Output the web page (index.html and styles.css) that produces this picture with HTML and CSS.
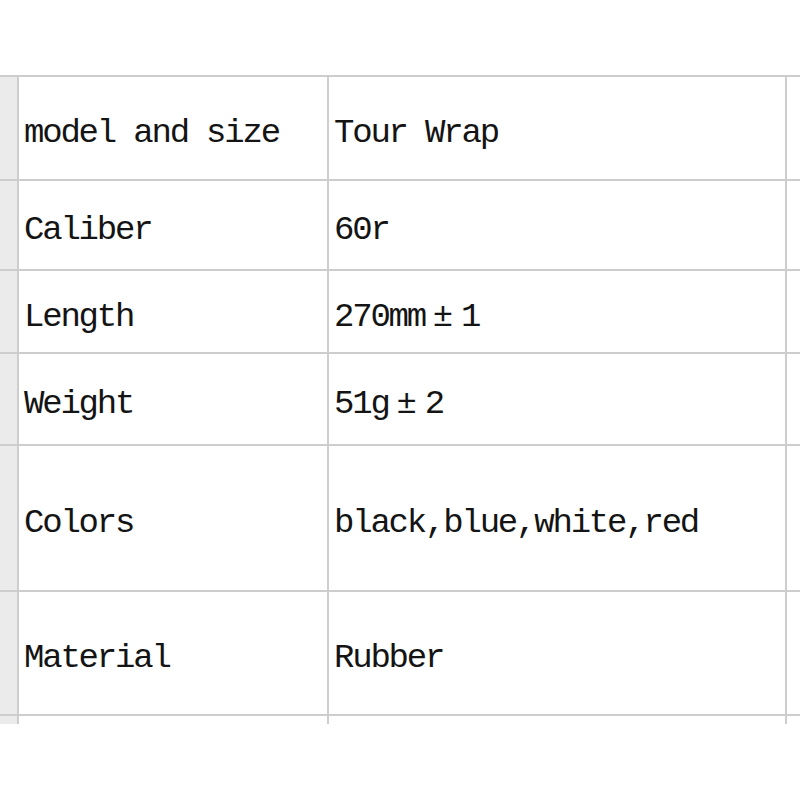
FILE: index.html
```html
<!DOCTYPE html>
<html>
<head>
<meta charset="utf-8">
<link rel="stylesheet" href="styles.css">
</head>
<body>
<div class="sheet">
<table class="grid">
  <colgroup>
    <col class="c-strip"><col class="c-key"><col class="c-val"><col class="c-extra">
  </colgroup>
  <tr class="r1"><td class="strip"></td><td>model and size</td><td>Tour Wrap</td><td class="extra"></td></tr>
  <tr class="r2"><td class="strip"></td><td>Caliber</td><td>60r</td><td class="extra"></td></tr>
  <tr class="r3"><td class="strip"></td><td>Length</td><td>270mm<span class="fw">±</span>1</td><td class="extra"></td></tr>
  <tr class="r4"><td class="strip"></td><td>Weight</td><td>51g<span class="fw">±</span>2</td><td class="extra"></td></tr>
  <tr class="r5"><td class="strip"></td><td>Colors</td><td>black,blue,white,red</td><td class="extra"></td></tr>
  <tr class="r6"><td class="strip"></td><td>Material</td><td>Rubber</td><td class="extra"></td></tr>
  <tr class="r7"><td class="strip"></td><td class="tail"></td><td class="tail"></td><td class="extra tail"></td></tr>
</table>
</div>
</body>
</html>
```

FILE: styles.css
```css
html, body {
  margin: 0;
  padding: 0;
  background: #fff;
}
.sheet {
  padding-top: 75px;
  width: 800px;
  overflow: hidden;
}
.grid {
  border-collapse: collapse;
  table-layout: fixed;
  width: 816px;
  font-family: "Liberation Mono", "Courier New", monospace;
  font-size: 34px;
  letter-spacing: -2.2px;
  color: #141414;
}
.c-strip { width: 18px; }
.c-key { width: 310px; }
.c-val { width: 458px; }
.c-extra { width: 30px; }
.grid td {
  border: 2px solid #cdcdcd;
  padding: 10px 0 0 5px;
  vertical-align: middle;
  white-space: nowrap;
  line-height: 34px;
}
.grid td.strip {
  background: #ebebeb;
  border-left: none;
  padding: 0;
}
.grid td.extra {
  border-right: none;
  padding: 0;
}
.r1 td { height: 92px; }
.r2 td { height: 78px; }
.r3 td { height: 71px; }
.r4 td { height: 80px; }
.r5 td { height: 134px; }
.r6 td { height: 112px; }
.r1 td.strip, .r1 td.extra { height: 102px; }
.r2 td.strip, .r2 td.extra { height: 88px; }
.r3 td.strip, .r3 td.extra { height: 81px; }
.r4 td.strip, .r4 td.extra { height: 90px; }
.r5 td.strip, .r5 td.extra { height: 144px; }
.r6 td.strip, .r6 td.extra { height: 122px; }
.grid tr.r7 td {
  height: 8px;
  line-height: 8px;
  border-bottom: none;
  padding: 0;
}
.fw {
  display: inline-block;
  width: 36px;
  text-align: center;
  letter-spacing: 0;
}
```
